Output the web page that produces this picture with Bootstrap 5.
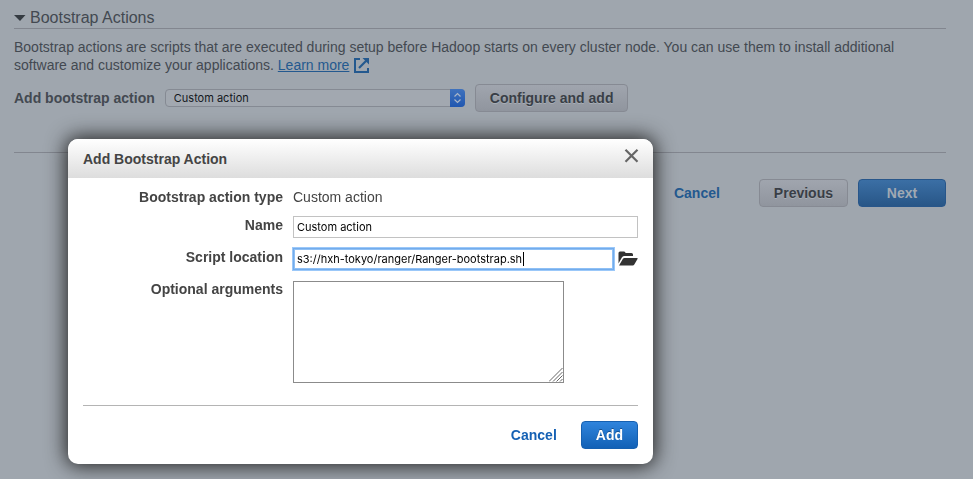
<!DOCTYPE html>
<html lang="en">
<head>
<meta charset="utf-8">
<meta name="viewport" content="width=device-width, initial-scale=1">
<title>Bootstrap Actions</title>
<link href="https://cdn.jsdelivr.net/npm/bootstrap@5.3.0/dist/css/bootstrap.min.css" rel="stylesheet">
<style>
  body { background: #9fa6ae; color: #434951; font: 14px/18px "Liberation Sans", Arial, sans-serif; }
  .page { padding: 8px 27px 0 14px; }
  .section-title { font-size: 16px; line-height: 20px; border-bottom: 1px solid #82868f; margin-bottom: 9px; }
  .toggle { color: inherit; font-size: 16px; line-height: 20px; }
  .dim-link { color: #24598f; }
  .intro { margin-bottom: 10px; }
  .intro svg { margin-left: 1px; }
  .action-line { gap: 10px; }
  .rule { border-top: 1px solid #82868f; margin-top: 40px; }
  .page-foot { padding-top: 26px; gap: 10px; }
  .page-foot a { margin-right: 29px; }
  .select-box { width: 300px; height: 18px; }
  .select-box select { appearance: none; width: 100%; height: 18px; padding: 0 24px 0 8px; border: 1px solid #858a93; border-radius: 4px; background: #a2a8b0; color: #14181d; font: 11px/16px Inter, sans-serif; }
  .select-cap { position: absolute; top: 0; right: 0; pointer-events: none; }
  .aws-btn { font-size: 14px; line-height: 18px; font-weight: 700; padding: 4px 14px; border-radius: 4px; }
  .aws-btn.dim { color: #393e46; background: linear-gradient(#a0a5ae, #90959e); border: 1px solid #868a93; text-shadow: 0 1px 0 #a8aeb6; }
  .aws-btn.dim-blue { color: #a0a9b3; background: linear-gradient(#3b6fa5, #285687); border: 1px solid #28568a; }
  .aws-btn.blue { color: #fff; background: linear-gradient(#2f84dc, #1261b6); border: 1px solid #1660b0; text-shadow: 0 -1px 0 #174f8d; }
  .wide { min-width: 88px; }
  .dialog-place { max-width: 585px; margin: 139px auto 15px 68px; }
  .dialog-box { color: #444; border: 0; border-radius: 10px; box-shadow: 0 0 20px 2px #222; }
  .dialog-head { background: linear-gradient(#fff, #ddd); border: 0; border-radius: 10px 10px 0 0; padding: 10px 14px 9px 15px; }
  .dialog-head .modal-title { font-size: 14px; line-height: 20px; font-weight: 700; }
  .dialog-body { padding: 10px 15px 0; }
  .form-lines { display: grid; grid-template-columns: 200px minmax(0, 1fr); column-gap: 10px; row-gap: 10px; }
  .form-lines label, .form-lines .term { font-weight: 700; text-align: right; line-height: 18px; }
  .field { height: 22px; padding: 0 3px; border: 1px solid #c2c2c2; border-radius: 0; color: #000; font: 11px/18px Inter, sans-serif; }
  .field:focus, .field.current { border-color: #73acec; box-shadow: 0 0 0 1px #9bc8f9, inset 0 0 0 1px #8fc0f5; outline: 0; color: #000; caret-color: transparent; }
  .text-cursor { position: absolute; left: 230px; top: 4px; width: 1px; height: 14px; background: #000; pointer-events: none; }
  .args { position: relative; width: 271px; padding-top: 1px; }
  .args textarea { display: block; width: 100%; height: 102px; resize: none; border: 1px solid #8b8b8b; }
  .args svg { position: absolute; right: 1px; bottom: 1px; pointer-events: none; }
  .dialog-foot { margin: 22px 15px 0; padding: 15px 0; border-top: 1px solid #b4b4b4; }
  .cancel { color: #1561b4; font-weight: 700; text-decoration: none; }
</style>
<script src="https://cdn.jsdelivr.net/npm/bootstrap@5.3.0/dist/js/bootstrap.bundle.min.js"></script>
</head>
<body>
<main class="page">
  <h1 class="section-title fw-normal">
    <button type="button" class="toggle btn p-0 border-0 d-flex align-items-center gap-1">
      <svg width="12" height="8" viewBox="0 0 12 8" aria-hidden="true"><path d="M0 1h11.500L6 7z" fill="#353b42"/></svg>
      <span>Bootstrap Actions</span>
    </button>
  </h1>
  <p class="intro">Bootstrap actions are scripts that are executed during setup before Hadoop starts on every cluster node. You can use them to install additional software and customize your applications. <a href="#" class="dim-link">Learn more</a>
    <svg width="15" height="15" viewBox="0 0 15 15" aria-hidden="true" class="align-text-bottom"><path d="M6 1H1v13h13V10" fill="none" stroke="#24598f" stroke-width="2"/><path d="M8.500 0H15v6.500z" fill="#24598f"/><path d="M12.500 2.500L5 10" stroke="#24598f" stroke-width="2.200"/></svg>
  </p>
  <div class="action-line d-flex align-items-center">
    <label for="action" class="fw-bold">Add bootstrap action</label>
    <div class="select-box position-relative">
      <select id="action" class="d-block"><option>Custom action</option></select>
      <svg class="select-cap" width="15" height="18" viewBox="0 0 15 18" aria-hidden="true"><defs><linearGradient id="cap" x2="0" y2="1"><stop stop-color="#3f72bd"/><stop offset="1" stop-color="#2057b0"/></linearGradient></defs><path d="M0 0h11a4 4 0 0 1 4 4v10a4 4 0 0 1-4 4H0z" fill="url(#cap)"/><path d="M4.500 7.500l3-3 3 3M4.500 10.500l3 3 3-3" fill="none" stroke="#a9b6c8" stroke-width="1.200"/></svg>
    </div>
    <button type="button" class="aws-btn dim">Configure and add</button>
  </div>
  <div class="rule"></div>
  <div class="page-foot d-flex justify-content-end align-items-center">
    <a href="#" class="dim-link fw-bold text-decoration-none">Cancel</a>
    <button type="button" class="aws-btn dim wide">Previous</button>
    <button type="button" class="aws-btn dim-blue wide">Next</button>
  </div>
</main>

<div class="modal d-block" role="dialog" aria-labelledby="dialog-title">
  <div class="modal-dialog dialog-place">
    <form class="modal-content dialog-box">
      <div class="modal-header dialog-head align-items-start">
        <h2 class="modal-title" id="dialog-title">Add Bootstrap Action</h2>
        <button type="button" class="btn p-0 border-0 d-flex" aria-label="Close"><svg width="15" height="15" viewBox="0 0 15 15" aria-hidden="true"><path d="M1.500 .800l12 12M13.500 .800l-12 12" stroke="#666" stroke-width="2.200"/></svg></button>
      </div>
      <div class="dialog-body">
        <div class="form-lines">
          <div class="term">Bootstrap action type</div>
          <div>Custom action</div>
          <label for="name">Name</label>
          <input id="name" type="text" class="form-control field" value="Custom action">
          <label for="script">Script location</label>
          <div class="d-flex align-items-center gap-1">
            <div class="position-relative flex-grow-1">
              <input id="script" type="text" class="form-control field current" value="s3://hxh-tokyo/ranger/Ranger-bootstrap.sh">
              <span class="text-cursor"></span>
            </div>
            <button type="button" class="btn p-0 border-0 d-flex" aria-label="Browse"><svg width="20" height="16" viewBox="0 0 20 16" aria-hidden="true"><path d="M.500 12.500V2Q.500.500 2 .500h4Q7.500.500 7.500 2h6q1.500 0 1.500 1.500V5H6.500Q5 5 4 6.200z" fill="#333"/><path d="M1 14.500L4.800 8Q5.400 7 6.500 7h12.700q.8 0 .3.900l-3.200 5.700q-.5.900-1.600.9z" fill="#333"/></svg></button>
          </div>
          <label for="args">Optional arguments</label>
          <div class="args">
            <textarea id="args"></textarea>
            <svg width="14" height="14" viewBox="0 0 14 14" aria-hidden="true"><path d="M0 13.500L13.500 0M4 13.500L13.500 4M7.500 13.500l6-6M11 13.500l2.500-2.500" stroke="#666"/></svg>
          </div>
        </div>
      </div>
      <div class="dialog-foot d-flex justify-content-end align-items-center">
        <a href="#" class="cancel me-4">Cancel</a>
        <button type="button" class="aws-btn blue">Add</button>
      </div>
    </form>
  </div>
</div>
<script>
  const script = document.getElementById('script');
  script.focus();
  script.setSelectionRange(script.value.length, script.value.length);
</script>
</body>
</html>
